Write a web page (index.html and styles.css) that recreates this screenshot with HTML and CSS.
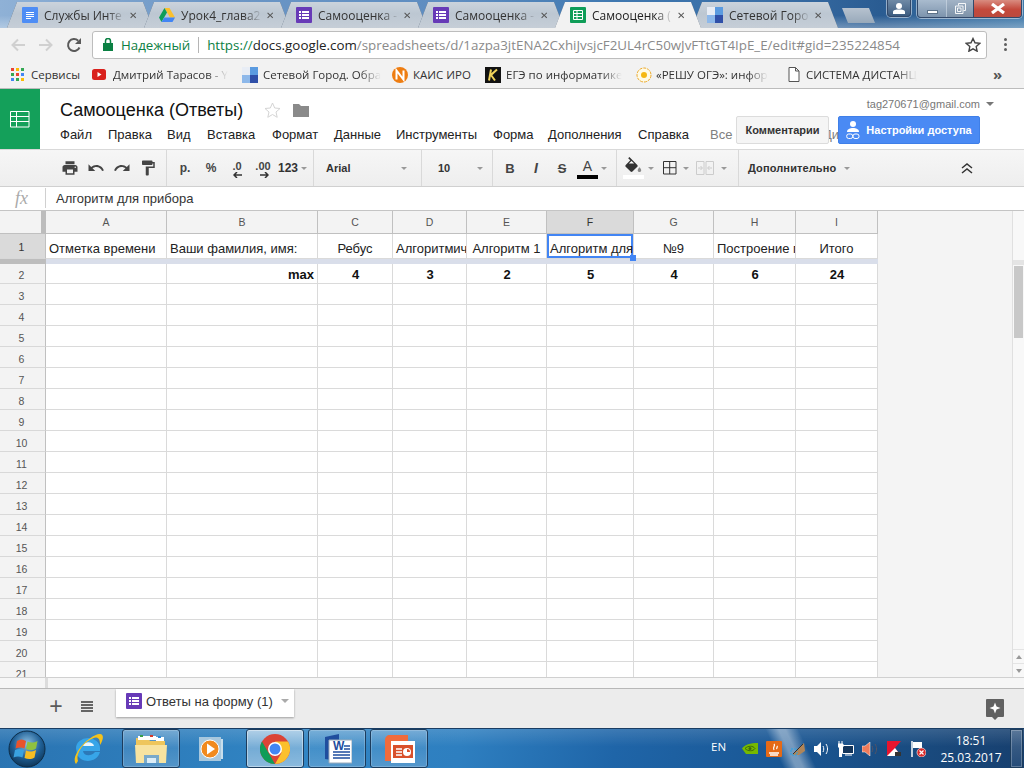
FILE: index.html
```html
<!DOCTYPE html>
<html lang="ru">
<head>
<meta charset="utf-8">
<title>Самооценка (Ответы)</title>
<link rel="stylesheet" href="styles.css">
</head>
<body>
<svg class="defs" width="0" height="0">
  <symbol id="i-forms" viewBox="0 0 16 16"><rect width="16" height="16" rx="1" fill="#673ab7"/><path d="M3 4h2v2H3zM6 4h7v2H6zM3 7h2v2H3zM6 7h7v2H6zM3 10h2v2H3zM6 10h7v2H6z" fill="#fff"/></symbol>
  <symbol id="i-sheets" viewBox="0 0 16 16"><rect width="16" height="16" rx="1" fill="#0f9d58"/><path d="M3.500 3.500h9v9h-9zM3.500 6.500h9M3.500 9.500h9M7 3.500v9" fill="none" stroke="#fff"/></symbol>
  <symbol id="i-sgo" viewBox="0 0 16 16"><rect width="16" height="16" fill="#e8edf5"/><rect x="8" width="8" height="8" fill="#5b9be0"/><rect y="8" width="8" height="8" fill="#8db8ea"/><rect x="8" y="8" width="8" height="8" fill="#2f4fa8"/></symbol>
</svg>

<header class="tabstrip">
  <div class="tab">
    <svg class="favicon" width="16" height="16" viewBox="0 0 16 16"><rect width="16" height="16" rx="1" fill="#4e8df5"/><path d="M4 5h8v1H4zM4 7h8v1H4zM4 9h8v1H4zM4 11h5v1H4z" fill="#fff"/></svg>
    <span class="tab-title">Службы Инте</span><span class="tab-x">✕</span>
  </div>
  <div class="tab">
    <svg class="favicon" width="16" height="16" viewBox="0 0 16 16"><path d="M5.500 1h5L16 10.500h-5z" fill="#fbc02d"/><path d="M5.500 1L0 10.500l2.500 4.500L8 5.500z" fill="#0f9d58"/><path d="M2.500 15h11l2.500-4.500H5.300z" fill="#4285f4"/></svg>
    <span class="tab-title">Урок4_глава2</span><span class="tab-x">✕</span>
  </div>
  <div class="tab">
    <svg class="favicon" width="16" height="16"><use href="#i-forms"/></svg>
    <span class="tab-title">Самооценка -</span><span class="tab-x">✕</span>
  </div>
  <div class="tab">
    <svg class="favicon" width="16" height="16"><use href="#i-forms"/></svg>
    <span class="tab-title">Самооценка -</span><span class="tab-x">✕</span>
  </div>
  <div class="tab tab-active">
    <svg class="favicon" width="16" height="16"><use href="#i-sheets"/></svg>
    <span class="tab-title">Самооценка (</span><span class="tab-x">✕</span>
  </div>
  <div class="tab">
    <svg class="favicon" width="16" height="16"><use href="#i-sgo"/></svg>
    <span class="tab-title">Сетевой Горо</span><span class="tab-x">✕</span>
  </div>
  <div class="newtab"></div>
  <div class="winctl">
    <div class="wbtn wbtn-user"><svg width="12" height="11" viewBox="0 0 12 11"><circle cx="6" cy="3" r="3" fill="#fff"/><path d="M0 11V9c0-2 3-2.500 6-2.500S12 7 12 9v2z" fill="#fff"/></svg></div>
    <div class="wgroup">
      <div class="wbtn wbtn-min"><i class="gl-min"></i></div>
      <div class="wbtn wbtn-max"><svg width="11" height="11" viewBox="0 0 11 11"><path d="M3.500 2.500v-2h7v7h-2M.5 3h7.500v7.500H.5zM2.500 5h3.500v3.500H2.500z" fill="none" stroke="#fff" stroke-opacity=".9"/></svg></div>
      <div class="wbtn wbtn-close"><svg width="16" height="11" viewBox="0 0 16 11"><path d="M2 1l12 9M14 1L2 10" stroke="#fff" stroke-width="3.200"/></svg></div>
    </div>
  </div>
</header>

<nav class="omnirow">
  <svg class="navic nav-back" width="16" height="16" viewBox="0 0 16 16"><path d="M15 8H3M8 2.500L2.500 8 8 13.500" fill="none" stroke="#d0d0d0" stroke-width="2"/></svg>
  <svg class="navic nav-fwd" width="16" height="16" viewBox="0 0 16 16"><path d="M1 8h12M8 2.500L13.500 8 8 13.500" fill="none" stroke="#d0d0d0" stroke-width="2"/></svg>
  <svg class="navic nav-reload" width="16" height="16" viewBox="0 0 16 16"><path d="M13.500 10.500A6 6 0 1 1 12.200 3.700" fill="none" stroke="#5a5a5a" stroke-width="2"/><path d="M15 1v6H9z" fill="#5a5a5a"/></svg>
  <div class="omnibox">
    <svg class="lock" width="10" height="13" viewBox="0 0 10 13"><path d="M0 5h10v8H0z" fill="#0b8043"/><path d="M2.500 5V3a2.500 2.500 0 0 1 5 0v2" fill="none" stroke="#0b8043" stroke-width="1.500"/></svg>
    <span class="secure">Надежный</span>
    <i class="omni-sep"></i>
    <span class="url"><span class="url-s">https://</span><span class="url-d">docs.google.com</span>/spreadsheets/d/1azpa3jtENA2CxhiJvsjcF2UL4rC50wJvFTtGT4IpE_E/edit#gid=235224854</span>
    <svg class="omni-star" width="16" height="15" viewBox="0 0 16 15"><path d="M8 1.500l2 4.300 4.700.6-3.500 3.200.9 4.600L8 11.900l-4.100 2.300.9-4.600L1.300 6.400 6 5.800z" fill="none" stroke="#444" stroke-width="1.400"/></svg>
  </div>
  <div class="kebab"><i></i><i></i><i></i></div>
</nav>

<nav class="bookmarks">
  <div class="bm bm-apps">
    <svg width="14" height="14" viewBox="0 0 14 14"><path d="M0 0h3v3H0z" fill="#ea4335"/><path d="M5 0h3v3H5z" fill="#fbbc05"/><path d="M10 0h3v3h-3z" fill="#34a853"/><path d="M0 5h3v3H0z" fill="#34a853"/><path d="M5 5h3v3H5z" fill="#ea4335"/><path d="M10 5h3v3h-3z" fill="#4285f4"/><path d="M0 10h3v3H0z" fill="#4285f4"/><path d="M5 10h3v3H5z" fill="#34a853"/><path d="M10 10h3v3h-3z" fill="#fbbc05"/></svg>
    <span>Сервисы</span>
  </div>
  <div class="bm bm-yt">
    <svg width="14" height="11" viewBox="0 0 14 11"><rect width="14" height="11" rx="2.500" fill="#d9201c"/><path d="M5.500 3l4 2.500-4 2.500z" fill="#fff"/></svg>
    <span class="bm-fade">Дмитрий Тарасов - Y</span>
  </div>
  <div class="bm bm-sgo">
    <svg width="16" height="16"><use href="#i-sgo"/></svg>
    <span class="bm-fade">Сетевой Город. Обра</span>
  </div>
  <div class="bm bm-kais">
    <svg width="16" height="16" viewBox="0 0 16 16"><circle cx="8" cy="8" r="8" fill="#ee7d11"/><path d="M4.500 12.500v-9l7 9v-9" fill="none" stroke="#fff" stroke-width="2"/></svg>
    <span>КАИС ИРО</span>
  </div>
  <div class="bm bm-ege">
    <svg width="16" height="16" viewBox="0 0 16 16"><rect width="16" height="16" fill="#111"/><path d="M6 2.500L4 13.500M12 2.500L6 8l4 5.500" fill="none" stroke="#f0d35a" stroke-width="2"/></svg>
    <span class="bm-fade">ЕГЭ по информатике</span>
  </div>
  <div class="bm bm-oge">
    <svg width="16" height="16" viewBox="0 0 16 16"><circle cx="8" cy="8" r="7" fill="#fffbe6" stroke="#eda92a" stroke-dasharray="3 1"/><circle cx="8" cy="8" r="3" fill="#f5b813"/></svg>
    <span class="bm-fade">«РЕШУ ОГЭ»: инфор</span>
  </div>
  <div class="bm bm-sys">
    <svg width="12" height="15" viewBox="0 0 12 15"><path d="M1 .5h6.500L11 4v10.500H1zM7.500.5V4H11" fill="#fff" stroke="#555"/></svg>
    <span class="bm-fade">СИСТЕМА ДИСТАНЦ</span>
  </div>
  <span class="bm-more">»</span>
</nav>

<section class="app-head">
  <div class="app-logo"><svg width="20" height="17" viewBox="0 0 20 17"><path d="M.5.500h18.500v15.500H.5zM.5 5.500h18.500M.5 10.500h18.500M6.500.500v15.500" fill="none" stroke="#fff"/></svg></div>
  <div class="app-main">
    <div class="doc-row">
      <span class="doc-title">Самооценка (Ответы)</span>
      <svg class="doc-star" width="17" height="16" viewBox="0 0 17 16"><path d="M8.500 1l2.200 5 5.300.5-4 3.500 1.200 5.300-4.700-2.800-4.700 2.800L5 10 1 6.500 6.300 6z" fill="none" stroke="#d4d4d4"/></svg>
      <svg class="doc-folder" width="16" height="13" viewBox="0 0 16 13"><path d="M0 0h6l2 2h8v11H0z" fill="#8a8a8a"/></svg>
    </div>
    <div class="menu">
      <span class="m m1">Файл</span><span class="m m2">Правка</span><span class="m m3">Вид</span><span class="m m4">Вставка</span><span class="m m5">Формат</span><span class="m m6">Данные</span><span class="m m7">Инструменты</span><span class="m m8">Форма</span><span class="m m9">Дополнения</span><span class="m m10">Справка</span><span class="saved">Все изменения на Диске</span>
    </div>
  </div>
  <div class="account">tag270671@gmail.com<i class="caret caret-acc"></i></div>
  <div class="head-btn btn-comments">Комментарии</div>
  <div class="head-btn btn-share">
    <svg width="14" height="19" viewBox="0 0 14 19"><circle cx="7" cy="3" r="3" fill="#fff"/><path d="M1 11c0-3 3-4 6-4s6 1 6 4z" fill="#fff"/><rect x=".7" y="13" width="6" height="4.500" rx="2" fill="none" stroke="#fff"/><rect x="7" y="13" width="6" height="4.500" rx="2" fill="none" stroke="#fff"/></svg>
    <span>Настройки доступа</span>
  </div>
</section>

<section class="toolbar">
  <div class="tg tg1">
    <div class="tb"><svg width="18" height="18" viewBox="0 0 24 24"><path fill="#444" d="M19 8H5c-1.660 0-3 1.340-3 3v6h4v4h12v-4h4v-6c0-1.660-1.340-3-3-3zm-3 11H8v-5h8v5zm3-7c-.55 0-1-.45-1-1s.45-1 1-1 1 .45 1 1-.45 1-1 1zm-1-9H6v4h12V3z"/></svg></div>
    <div class="tb"><svg width="18" height="18" viewBox="0 0 24 24"><path fill="#444" d="M12.500 8c-2.650 0-5.050.99-6.900 2.600L2 7v9h9l-3.620-3.620c1.390-1.160 3.160-1.880 5.120-1.880 3.540 0 6.550 2.310 7.600 5.500l2.370-.78C21.080 11.030 17.150 8 12.500 8z"/></svg></div>
    <div class="tb"><svg width="18" height="18" viewBox="0 0 24 24"><path fill="#444" d="M18.400 10.600C16.550 8.990 14.150 8 11.500 8c-4.650 0-8.580 3.030-9.960 7.220L3.900 16c1.050-3.190 4.050-5.500 7.600-5.500 1.950 0 3.730.72 5.120 1.880L13 16h9V7l-3.600 3.600z"/></svg></div>
    <div class="tb"><svg width="18" height="18" viewBox="0 0 24 24"><path fill="#444" d="M18 4V3c0-.55-.45-1-1-1H5c-.55 0-1 .45-1 1v4c0 .55.45 1 1 1h12c.55 0 1-.45 1-1V6h1v4H9v11c0 .55.45 1 1 1h2c.55 0 1-.45 1-1v-9h8V4h-3z"/></svg></div>
  </div>
  <div class="tg tg2">
    <div class="tb tb-t">р.</div>
    <div class="tb tb-t">%</div>
    <div class="tb tb-dec"><span>.0</span><svg width="9" height="6" viewBox="0 0 9 6"><path d="M9 3H2M4 0L1 3l3 3" fill="none" stroke="#333" stroke-width="1.500"/></svg></div>
    <div class="tb tb-dec"><span>.00</span><svg class="dec-r" width="9" height="6" viewBox="0 0 9 6"><path d="M0 3h7M5 0l3 3-3 3" fill="none" stroke="#333" stroke-width="1.500"/></svg></div>
    <div class="tb-123">123<i class="caret caret-tb"></i></div>
  </div>
  <div class="tg tg3"><span class="tb-sel">Arial</span><i class="caret caret-tb"></i></div>
  <div class="tg tg4"><span class="tb-sel">10</span><i class="caret caret-tb"></i></div>
  <div class="tg tg5">
    <div class="tb tb-b">B</div>
    <div class="tb tb-i">I</div>
    <div class="tb tb-s">S</div>
    <div class="tb tb-a">A<i class="a-bar"></i></div>
    <i class="caret caret-tb caret-a"></i>
  </div>
  <div class="tg tg6">
    <div class="tb tb-fill"><svg width="17" height="15" viewBox="3 0 18.500 17"><path fill="#333" d="M16.560 8.940L7.620 0 6.210 1.410l2.380 2.380-5.150 5.150c-.59.59-.59 1.540 0 2.120l5.500 5.500c.29.29.68.44 1.060.44s.77-.15 1.060-.44l5.500-5.500c.59-.58.59-1.530 0-2.120z"/><path fill="#fff" d="M7 7.500l3-3 3 3z"/><path fill="#8a8a8a" d="M19 11.500s-2 2.170-2 3.500c0 1.100.9 2 2 2s2-.9 2-2c0-1.330-2-3.500-2-3.500z"/></svg><i class="fill-bar"></i></div>
    <i class="caret caret-tb caret-fill"></i>
    <div class="tb tb-nar"><svg width="14" height="14" viewBox="0 0 14 14"><path d="M.5.500h12.500v12.500H.5zM.5 6.700h12.500M6.700.500v12.500" fill="none" stroke="#333"/></svg></div>
    <i class="caret caret-tb caret-bord"></i>
    <div class="tb tb-nar"><svg width="18" height="14" viewBox="0 0 18 14"><path d="M.5.500h7.500v13H.5zM10 .5h7.500v13H10zM2 7h4M16 7h-4M4.500 5l2 2-2 2M13.500 5l-2 2 2 2" fill="none" stroke="#ccc"/></svg></div>
    <i class="caret caret-tb caret-merge"></i>
  </div>
  <div class="tg tg7">
    <span class="tb-more">Дополнительно</span><i class="caret caret-tb"></i>
    <svg class="collapse" width="12" height="11" viewBox="0 0 12 11"><path d="M1 5l5-4 5 4M1 10l5-4 5 4" fill="none" stroke="#333" stroke-width="1.500"/></svg>
  </div>
</section>

<section class="fbar">
  <span class="fx">fx</span>
  <span class="fval">Алгоритм для прибора</span>
</section>

<main class="sheet">
  <div class="grid">
    <div class="corner"></div>
    <div class="ch">A</div><div class="ch">B</div><div class="ch">C</div><div class="ch">D</div><div class="ch">E</div><div class="ch ch-sel">F</div><div class="ch">G</div><div class="ch">H</div><div class="ch">I</div>

    <div class="rh rh-sel">1</div>
    <div class="c c-b">Отметка времени</div>
    <div class="c c-b">Ваши фамилия, имя:</div>
    <div class="c c-b c-m">Ребус</div>
    <div class="c c-b">Алгоритмич</div>
    <div class="c c-b c-m">Алгоритм 1</div>
    <div class="c c-b c-active">Алгоритм для<i class="handle"></i></div>
    <div class="c c-b c-m">№9</div>
    <div class="c c-b">Построение г</div>
    <div class="c c-b c-m">Итого</div>

    <div class="frz-h"></div><div class="frz"></div>

    <div class="rh">2</div>
    <div class="c"></div>
    <div class="c c-r c-bold">max</div>
    <div class="c c-m c-bold">4</div>
    <div class="c c-m c-bold">3</div>
    <div class="c c-m c-bold">2</div>
    <div class="c c-m c-bold">5</div>
    <div class="c c-m c-bold">4</div>
    <div class="c c-m c-bold">6</div>
    <div class="c c-m c-bold">24</div>

    <div class="rh">3</div><div class="c"></div><div class="c"></div><div class="c"></div><div class="c"></div><div class="c"></div><div class="c"></div><div class="c"></div><div class="c"></div><div class="c"></div>
    <div class="rh">4</div><div class="c"></div><div class="c"></div><div class="c"></div><div class="c"></div><div class="c"></div><div class="c"></div><div class="c"></div><div class="c"></div><div class="c"></div>
    <div class="rh">5</div><div class="c"></div><div class="c"></div><div class="c"></div><div class="c"></div><div class="c"></div><div class="c"></div><div class="c"></div><div class="c"></div><div class="c"></div>
    <div class="rh">6</div><div class="c"></div><div class="c"></div><div class="c"></div><div class="c"></div><div class="c"></div><div class="c"></div><div class="c"></div><div class="c"></div><div class="c"></div>
    <div class="rh">7</div><div class="c"></div><div class="c"></div><div class="c"></div><div class="c"></div><div class="c"></div><div class="c"></div><div class="c"></div><div class="c"></div><div class="c"></div>
    <div class="rh">8</div><div class="c"></div><div class="c"></div><div class="c"></div><div class="c"></div><div class="c"></div><div class="c"></div><div class="c"></div><div class="c"></div><div class="c"></div>
    <div class="rh">9</div><div class="c"></div><div class="c"></div><div class="c"></div><div class="c"></div><div class="c"></div><div class="c"></div><div class="c"></div><div class="c"></div><div class="c"></div>
    <div class="rh">10</div><div class="c"></div><div class="c"></div><div class="c"></div><div class="c"></div><div class="c"></div><div class="c"></div><div class="c"></div><div class="c"></div><div class="c"></div>
    <div class="rh">11</div><div class="c"></div><div class="c"></div><div class="c"></div><div class="c"></div><div class="c"></div><div class="c"></div><div class="c"></div><div class="c"></div><div class="c"></div>
    <div class="rh">12</div><div class="c"></div><div class="c"></div><div class="c"></div><div class="c"></div><div class="c"></div><div class="c"></div><div class="c"></div><div class="c"></div><div class="c"></div>
    <div class="rh">13</div><div class="c"></div><div class="c"></div><div class="c"></div><div class="c"></div><div class="c"></div><div class="c"></div><div class="c"></div><div class="c"></div><div class="c"></div>
    <div class="rh">14</div><div class="c"></div><div class="c"></div><div class="c"></div><div class="c"></div><div class="c"></div><div class="c"></div><div class="c"></div><div class="c"></div><div class="c"></div>
    <div class="rh">15</div><div class="c"></div><div class="c"></div><div class="c"></div><div class="c"></div><div class="c"></div><div class="c"></div><div class="c"></div><div class="c"></div><div class="c"></div>
    <div class="rh">16</div><div class="c"></div><div class="c"></div><div class="c"></div><div class="c"></div><div class="c"></div><div class="c"></div><div class="c"></div><div class="c"></div><div class="c"></div>
    <div class="rh">17</div><div class="c"></div><div class="c"></div><div class="c"></div><div class="c"></div><div class="c"></div><div class="c"></div><div class="c"></div><div class="c"></div><div class="c"></div>
    <div class="rh">18</div><div class="c"></div><div class="c"></div><div class="c"></div><div class="c"></div><div class="c"></div><div class="c"></div><div class="c"></div><div class="c"></div><div class="c"></div>
    <div class="rh">19</div><div class="c"></div><div class="c"></div><div class="c"></div><div class="c"></div><div class="c"></div><div class="c"></div><div class="c"></div><div class="c"></div><div class="c"></div>
    <div class="rh">20</div><div class="c"></div><div class="c"></div><div class="c"></div><div class="c"></div><div class="c"></div><div class="c"></div><div class="c"></div><div class="c"></div><div class="c"></div>
    <div class="rh">21</div><div class="c"></div><div class="c"></div><div class="c"></div><div class="c"></div><div class="c"></div><div class="c"></div><div class="c"></div><div class="c"></div><div class="c"></div>
  </div>
  <div class="gutter"></div>
  <div class="vscroll">
    <div class="vs-top"></div>
    <div class="vs-track"><div class="vs-thumb"></div></div>
    <div class="vs-btn"><i class="tri-up"></i></div>
    <div class="vs-btn"><i class="tri-down"></i></div>
  </div>
</main>

<div class="hscroll"><div class="hs-left"></div><div class="hs-grip"></div></div>

<section class="sheetbar">
  <span class="sb-plus">+</span>
  <div class="sb-list"><i></i><i></i><i></i><i></i></div>
  <div class="sb-tab">
    <svg width="16" height="16"><use href="#i-forms"/></svg>
    <span>Ответы на форму (1)</span>
    <i class="caret caret-sb"></i>
  </div>
  <svg class="explore" width="18" height="21" viewBox="0 0 18 21"><path d="M1 0h16a1 1 0 0 1 1 1v16a1 1 0 0 1-1 1h-5l-3 3-3-3H1a1 1 0 0 1-1-1V1a1 1 0 0 1 1-1z" fill="#616161"/><path d="M9 3.500l1.500 4 4 1.500-4 1.500-1.500 4-1.500-4-4-1.500 4-1.500z" fill="#fff"/></svg>
</section>

<footer class="taskbar">
  <svg class="orb" width="38" height="38" viewBox="0 0 38 38">
    <defs>
      <radialGradient id="orbg" cx=".5" cy=".35" r=".7"><stop offset="0" stop-color="#8cc0e4"/><stop offset=".55" stop-color="#1f5f95"/><stop offset="1" stop-color="#0b2f4e"/></radialGradient>
    </defs>
    <circle cx="19" cy="19" r="18" fill="url(#orbg)" stroke="#0d2c46"/>
    <path d="M9 11c3-2 6-2 9 0l-1.500 7.500c-3-1.500-6-1.500-9 0z" fill="#e8532b"/>
    <path d="M19.500 11.500c3 1.500 6 1.500 10-.5l-1.500 7.500c-3 2-6.500 2-10 .5z" fill="#8fc240"/>
    <path d="M7 20c3-1.500 6-1.500 9 0l-1.500 7.500c-3-1.500-6-1.500-9 0z" fill="#3aa2e0"/>
    <path d="M18 20.500c3 1.500 6 1.500 10-.5l-1.500 7.500c-3 2-6.500 2-10 .5z" fill="#f6bd22"/>
  </svg>
  <svg class="ti ti-ie" width="32" height="32" viewBox="0 0 32 32">
    <path d="M4 15a12 10 0 0 1 24 0v3H11c.5 5 8 6 12 1h5C25 30 9 31 5 21" fill="#37a5e8"/>
    <path d="M11 13h11c-1-5-10-5-11 0z" fill="#e8f6ff"/>
    <path d="M4 31C-2 24 14 4 27 1c5-1 5 5 1 11 0-3 0-7-4-7.500C14 6 3 20 6 28z" fill="#f4c21c"/>
  </svg>
  <div class="tbtn tbtn-ex">
    <svg width="32" height="30" viewBox="0 0 32 30"><path d="M1 4h12l2 3h15v21H1z" fill="#eec65c"/><path d="M3 2h10v4H3z" fill="#fff"/><path d="M5 1h3v2H5z" fill="#3aa04a"/><path d="M13 2h8v4h-8z" fill="#fff"/><path d="M15 1h3v2h-3z" fill="#d83a2a"/><path d="M21 3h8v4h-8z" fill="#fff"/><path d="M23 2h3v2h-3z" fill="#2a8ad8"/><path d="M0 11h32l-1 18H1z" fill="#f7e3a0"/><path d="M9 21h15v8H9z" fill="#79aacb"/><path d="M12 24h9v5h-9z" fill="#dcedf7"/></svg>
  </div>
  <div class="tslot">
    <svg width="26" height="26" viewBox="0 0 26 26"><rect x="0" y="1" width="22" height="24" fill="#a8c8de"/><rect x="22" y="3" width="2" height="20" fill="#c8deec"/><circle cx="11" cy="13" r="9" fill="#f18a1e" stroke="#fff"/><path d="M8 7.500l8 5.500-8 5.500z" fill="#fff"/></svg>
  </div>
  <div class="tbtn tbtn-on">
    <svg width="30" height="30" viewBox="0 0 30 30"><circle cx="15" cy="15" r="15" fill="#db4437"/><path d="M15 7.500h13A15 15 0 0 1 15 30l6.500-11.300z" fill="#fbc02d"/><path d="M2 7.500L8.500 18.700 15 30A15 15 0 0 1 2 7.500z" fill="#0f9d58"/><circle cx="15" cy="15" r="7" fill="#fff"/><circle cx="15" cy="15" r="5.500" fill="#4285f4"/></svg>
  </div>
  <div class="tbtn">
    <svg width="30" height="30" viewBox="0 0 30 30"><path d="M3 3l14-3v27L3 25z" fill="#1f4e9e"/><path d="M7 6h23v23H7z" fill="#fff" stroke="#9ab"/><text x="11" y="16" class="app-w">W</text><path d="M22 12h6M22 15h6M11 18h17M11 21h17M11 24h17" stroke="#1f4e9e" stroke-width="1.500"/></svg>
  </div>
  <div class="tbtn">
    <svg width="32" height="30" viewBox="0 0 32 30"><path d="M2 6c0-3 2-5 5-5h18v26H2z" fill="#f06b3c"/><path d="M8 7h24v22H8z" fill="#fff"/><path d="M10 11h20v13H10z" fill="#d9502b"/><path d="M13 15h6M13 18h6M13 21h6" stroke="#fff" stroke-width="1.500"/><circle cx="24" cy="18" r="4" fill="#fff"/><path d="M24 18V15a3 3 0 0 1 3 3z" fill="#d9502b"/></svg>
  </div>
  <div class="tray">
    <span class="lang">EN</span>
    <svg class="tr tr-nv" width="16" height="11" viewBox="0 0 16 11"><path d="M0 5.500C3 1.500 8 0 16 0v11H4z" fill="#76b900"/><path d="M3 5.500C6 2.500 11 2.500 13 5.500 11 8.500 6 8.500 3 5.500z" fill="none" stroke="#3e6a0a"/><circle cx="8" cy="5.500" r="1.500" fill="#3e6a0a"/></svg>
    <svg class="tr tr-java" width="16" height="16" viewBox="0 0 16 16"><rect width="16" height="16" rx="1" fill="#e56a17"/><path d="M3 12h10M4 14h8M8 3c2 2-2 3 0 6M11 5c1 1-1 2 0 3" fill="none" stroke="#fff" stroke-width="1.300"/></svg>
    <svg class="tr tr-pen" width="16" height="15" viewBox="0 0 16 15"><path d="M2 14L14 2l1 8-6 4z" fill="#b08558"/><path d="M1 8h6v6H1z" fill="none" stroke="#27a2e8" stroke-dasharray="2 1"/><path d="M3 13L13 3" stroke="#333"/></svg>
    <svg class="tr tr-vol" width="15" height="14" viewBox="0 0 15 14"><path d="M0 4h3l4-4v14l-4-4H0z" fill="#fff"/><path d="M9 4c1 2 1 4 0 6M12 2c2 3 2 7 0 10" fill="none" stroke="#fff"/></svg>
    <svg class="tr tr-net" width="16" height="16" viewBox="0 0 16 16"><path d="M4.500 4.500h11v8h-11z" fill="#14365c" stroke="#fff"/><path d="M1 0v3M4 0v3M0 3h5v3H3.500v10h-2V6H0zM7 14h7" fill="#fff" stroke="#fff"/></svg>
    <svg class="tr tr-spk" width="15" height="14" viewBox="0 0 15 14"><path d="M0 4h3l5-4v14l-5-4H0z" fill="#ef7b5a" stroke="#fff" stroke-width=".5"/><path d="M10 4c1 2 1 4 0 6M13 2c2 3 2 7 0 10" fill="none" stroke="#556"/></svg>
    <svg class="tr tr-kav" width="14" height="15" viewBox="0 0 14 15"><path d="M0 0h14L8 7l6 8H0z" fill="#e8142e"/><path d="M0 15L8 7l6 8z" fill="#fff"/><path d="M8 11h6v4H8z" fill="#333"/></svg>
    <svg class="tr tr-flag" width="15" height="16" viewBox="0 0 15 16"><path d="M1 0v16" stroke="#fff" stroke-width="1.500"/><path d="M2 1h9v6H2z" fill="#fff"/><circle cx="10.500" cy="11.500" r="4.500" fill="#d92b2b" stroke="#fff" stroke-width=".6"/><path d="M8.500 9.500l4 4M12.500 9.500l-4 4" stroke="#fff" stroke-width="1.200"/></svg>
    <div class="clock"><span>18:51</span><span>25.03.2017</span></div>
    <div class="showdesk"></div>
  </div>
</footer>
</body>
</html>
```

FILE: styles.css
```css
* { box-sizing: border-box; }
html, body { margin: 0; padding: 0; }
body {
  width: 1024px;
  height: 768px;
  overflow: hidden;
  display: flex;
  flex-direction: column;
  background: #fff;
  font-family: "Liberation Sans", Arial, sans-serif;
  color: #222;
}
i { display: block; font-style: normal; }
.defs { position: absolute; }

/* ---------- tab strip ---------- */
.tabstrip {
  height: 28px;
  flex: none;
  display: flex;
  align-items: flex-end;
  padding-left: 7px;
  position: relative;
  background:
    linear-gradient(180deg, #ffffff00 55%, #ffffff50 100%),
    linear-gradient(90deg, #8fb1d6 0%, #6d97c6 20%, #5d8cc0 45%, #3f78b0 60%, #3a6ea6 75%, #2a5c92 86%, #3f79aa 100%);
}
.tab {
  position: relative;
  width: 146px;
  height: 26px;
  margin-right: -9px;
  flex: none;
  display: flex;
  align-items: center;
  padding-left: 15px;
  filter: drop-shadow(0 0 .6px #4a5a6c);
  font: 12px "Open Sans", "Noto Sans", sans-serif;
  color: #333;
}
.tab::before {
  content: "";
  position: absolute;
  inset: 0;
  clip-path: polygon(0 100%, 10px 0, 136px 0, 146px 100%);
  background: linear-gradient(180deg, #cbd3dc 0%, #bcc7d2 45%, #c6ced7 100%);
}
.tab > * { position: relative; }
.tab-active { z-index: 2; color: #222; }
.tab-active::before { background: #f2f2f2; }
.favicon { flex: none; }
.tab-title {
  width: 81px;
  margin-left: 6px;
  white-space: nowrap;
  overflow: hidden;
  -webkit-mask-image: linear-gradient(90deg, #000 78%, transparent);
  mask-image: linear-gradient(90deg, #000 78%, transparent);
}
.tab-x {
  margin-left: 4px;
  font-size: 10px;
  font-weight: 700;
  color: #555;
  font-family: "DejaVu Sans", sans-serif;
}
.newtab {
  width: 33px;
  height: 15px;
  margin: 0 0 5px 13px;
  flex: none;
  clip-path: polygon(0 0, 27px 0, 33px 100%, 6px 100%);
  background: linear-gradient(180deg, #b6c2cf, #98a9ba);
}
.winctl {
  position: absolute;
  top: 0;
  right: 2px;
  display: flex;
  gap: 6px;
}
.wgroup { display: flex; border: 1px solid #33496a; border-top: 0; border-radius: 0 0 4px 4px; box-shadow: 0 0 0 1px #c9d6e4aa; overflow: hidden; }
.wbtn { height: 17px; display: flex; align-items: center; justify-content: center; }
.wbtn-user {
  width: 24px;
  border: 1px solid #33496a;
  border-top: 0;
  border-radius: 0 0 4px 4px;
  box-shadow: 0 0 0 1px #c9d6e4aa;
  background: linear-gradient(180deg, #6f8aa6, #3d5c80);
}
.wbtn-min { width: 29px; background: linear-gradient(180deg, #a9bbce, #7d94ad); border-right: 1px solid #d8e1ea88; }
.wbtn-max { width: 27px; background: linear-gradient(180deg, #a2b3c6, #7d92a8); border-right: 1px solid #33496a; }
.wbtn-close { width: 47px; background: linear-gradient(180deg, #d98c80, #c4493c 55%, #bb4a3e); }
.gl-min { width: 11px; height: 4px; margin-top: 6px; background: #fff; border: 1px solid #5d7288; }

/* ---------- omnibox row ---------- */
.omnirow {
  height: 33px;
  flex: none;
  display: flex;
  align-items: center;
  background: #f2f2f2;
}
.navic { flex: none; }
.nav-back { margin-left: 10px; }
.nav-fwd { margin-left: 12px; }
.nav-reload { margin-left: 12px; }
.omnibox {
  width: 895px;
  height: 28px;
  margin-left: 10px;
  display: flex;
  align-items: center;
  background: #fff;
  border: 1px solid #bdbdbd;
  border-radius: 3px;
  font: 13.350px "Open Sans", "Noto Sans", sans-serif;
  white-space: nowrap;
}
.lock { margin-left: 10px; flex: none; }
.secure { margin-left: 8px; color: #0b8043; font-size: 13.300px; }
.omni-sep { width: 1px; height: 16px; margin: 0 8px; background: #b5b5b5; }
.url { color: #8a8a8a; flex: 1; overflow: hidden; }
.url-s { color: #0b8043; }
.url-d { color: #222; }
.omni-star { margin: 0 5px 0 4px; flex: none; }
.kebab { margin-left: 17px; display: flex; flex-direction: column; gap: 2px; }
.kebab i { width: 3px; height: 3px; background: #5f5f5f; border-radius: 50%; }

/* ---------- bookmarks ---------- */
.bookmarks {
  height: 28px;
  flex: none;
  display: flex;
  align-items: center;
  background: #f2f2f2;
  border-bottom: 1px solid #bcbcbc;
  font: 11.500px "Open Sans", "Noto Sans", sans-serif;
  color: #333;
  white-space: nowrap;
  position: relative;
}
.bm { display: flex; align-items: center; flex: none; overflow: hidden; }
.bm svg { flex: none; }
.bm-fade {
  overflow: hidden;
  -webkit-mask-image: linear-gradient(90deg, #000 82%, transparent);
  mask-image: linear-gradient(90deg, #000 82%, transparent);
}
.bm-apps { margin-left: 11px; width: 81px; gap: 6px; }
.bm-yt { width: 150px; gap: 7px; }
.bm-sgo { width: 150px; gap: 5px; }
.bm-kais { width: 93px; gap: 5px; }
.bm-ege { width: 151px; gap: 5px; }
.bm-oge { width: 152px; gap: 4px; }
.bm-sys { width: 134px; gap: 6px; }
.bm-more { margin-left: 71px; font-size: 15px; font-weight: 700; color: #555; line-height: 1; }

/* ---------- docs header ---------- */
.app-head {
  height: 61px;
  flex: none;
  display: flex;
  position: relative;
  background: #fff;
  border-bottom: 1px solid #d9d9d9;
}
.app-logo {
  width: 40px;
  flex: none;
  display: flex;
  align-items: center;
  justify-content: center;
  background: #14a05a;
}
.app-main { padding-left: 20px; flex: 1; min-width: 0; }
.doc-row { display: flex; align-items: center; height: 24px; margin-top: 9px; }
.doc-title { font-size: 18px; color: #111; }
.doc-star { margin-left: 21px; }
.doc-folder { margin-left: 12px; }
.menu { display: flex; height: 20px; margin-top: 2px; font-size: 13px; align-items: center; white-space: nowrap; overflow: hidden; color: #222; }
.m { flex: none; }
.m1 { width: 48px; }
.m2 { width: 59px; }
.m3 { width: 40px; }
.m4 { width: 65px; }
.m5 { width: 62px; }
.m6 { width: 62px; }
.m7 { width: 97px; }
.m8 { width: 55px; }
.m9 { width: 90px; }
.m10 { width: 72px; }
.saved { color: #808080; flex: none; }
.account {
  position: absolute;
  top: 9px;
  right: 30px;
  display: flex;
  align-items: center;
  gap: 6px;
  font-size: 11px;
  color: #777;
}
.head-btn {
  position: absolute;
  top: 27px;
  height: 28px;
  display: flex;
  align-items: center;
  justify-content: center;
  font-size: 11px;
  font-weight: 700;
  border-radius: 2px;
}
.btn-comments { left: 736px; width: 93px; background: #f5f5f5; border: 1px solid #dcdcdc; color: #333; }
.btn-share { left: 838px; width: 142px; background: #4a8af4; border: 1px solid #3f7fe8; color: #fff; gap: 6px; }

.caret { width: 0; height: 0; flex: none; border-style: solid; border-color: #888 transparent transparent; }
.caret-acc { border-width: 4px 4.500px 0; border-top-color: #777; }
.caret-tb { border-width: 3px 3px 0; border-top-color: #999; }
.caret-sb { border-width: 4px 4.500px 0; border-top-color: #aaa; margin-left: 4px; }

/* ---------- toolbar ---------- */
.toolbar {
  height: 37px;
  flex: none;
  display: flex;
  background: linear-gradient(180deg, #f6f6f6, #eeeeee);
  border-bottom: 1px solid #d0d0d0;
  color: #333;
  font-size: 11px;
  font-weight: 700;
}
.tg { display: flex; align-items: center; flex: none; border-right: 1px solid #d9d9d9; }
.tg1 { width: 167px; padding-left: 57px; }
.tg2 { width: 147px; padding-left: 5px; }
.tg3 { width: 108px; padding: 0 14px 0 12px; justify-content: space-between; }
.tg4 { width: 71px; padding: 0 9px 0 16px; justify-content: space-between; }
.tg5 { width: 124px; padding-left: 4px; }
.tg6 { width: 122px; padding-left: 4px; }
.tg7 { flex: 1; padding-left: 9px; border-right: 0; }
.tb { width: 26px; height: 26px; flex: none; display: flex; align-items: center; justify-content: center; position: relative; color: #444; }
.tb-t { font-size: 12px; }
.tb-dec { font-size: 11px; }
.tb-dec span { margin-top: -4px; }
.tb-dec svg { position: absolute; left: 9px; bottom: 3px; }
.tb-dec .dec-r { left: 10px; }
.tb-123 { margin-left: 2px; display: flex; align-items: center; gap: 3px; font-size: 12px; }
.tb-sel { font-size: 11px; }
.tb-b { font-size: 13px; font-weight: 700; }
.tb-i { font-size: 14px; font-style: italic; font-weight: 700; }
.tb-s { font-size: 13px; font-weight: 700; text-decoration: line-through; }
.tb-a { font-size: 14px; font-weight: 400; padding-bottom: 5px; width: 25px; }
.a-bar { position: absolute; left: 2px; bottom: 2px; width: 21px; height: 4px; background: #000; }
.caret-a { margin-left: 1px; }
.tb-fill { padding-bottom: 7px; width: 24px; }
.fill-bar { position: absolute; left: 2px; bottom: 2px; width: 21px; height: 4px; background: #fff; }
.tb-nar { width: 24px; margin-left: 4px; }
.caret-fill { margin-left: 3px; }
.caret-bord { margin-left: 1px; }
.caret-merge { margin-left: 4px; }
.tb-more { margin-right: 8px; letter-spacing: .12px; }
.collapse { margin-left: 111px; }

/* ---------- formula bar ---------- */
.fbar {
  height: 23px;
  flex: none;
  display: flex;
  align-items: center;
  padding-bottom: 1px;
  background: #fff;
  font-size: 13px;
  color: #333;
}
.fx {
  width: 46px;
  height: 20px;
  flex: none;
  padding-right: 2px;
  text-align: center;
  font: italic 18px/20px "Liberation Serif", serif;
  color: #aaa;
  border-right: 1px solid #d0d0d0;
}
.fval { margin-left: 10px; }

/* ---------- sheet ---------- */
.sheet {
  height: 467px;
  flex: none;
  display: flex;
  overflow: hidden;
  background: #f4f4f4;
  border-top: 1px solid #c4c4c4;
}
.grid {
  width: 878px;
  flex: none;
  display: grid;
  grid-template-columns: 46px 121px 151px 75px 74px 80px 87px 80px 82px 82px;
  grid-template-rows: 23px 25px 5px 20px repeat(19, 21px);
  font-size: 13px;
  color: #222;
  background: #fff;
  border-right: 1px solid #c8c8c8;
}
.corner { background: #f3f3f3; border-right: 5px solid #bcbcbc; border-bottom: 1px solid #c0c0c0; }
.ch {
  display: flex;
  align-items: center;
  justify-content: center;
  background: #f3f3f3;
  border-right: 1px solid #c0c0c0;
  border-bottom: 1px solid #c0c0c0;
  font-size: 10.500px;
  color: #555;
}
.ch-sel { background: #dadada; color: #333; }
.rh {
  display: flex;
  align-items: center;
  justify-content: center;
  padding: 3px 2px 0 0;
  background: #f3f3f3;
  border-right: 1px solid #c0c0c0;
  border-bottom: 1px solid #d8d8d8;
  font-size: 10.500px;
  color: #555;
}
.rh-sel { background: #dadada; color: #333; padding-top: 1px; }
.c {
  position: relative;
  min-width: 0;
  padding: 0 3px;
  white-space: nowrap;
  overflow: hidden;
  border-right: 1px solid #dadada;
  border-bottom: 1px solid #dadada;
  line-height: 20px;
}
.c-b { padding-top: 5px; }
.c-m { text-align: center; }
.c-r { text-align: right; }
.c-bold { padding-top: 1px; font-weight: 700; color: #111; }
.c-m.c-bold { padding-left: 3px; padding-right: 2px; }
.c-active { overflow: visible; box-shadow: inset 0 0 0 2px #4285f4; z-index: 1; }
.handle { position: absolute; right: -3px; bottom: -3px; width: 6px; height: 6px; background: #4285f4; }
.frz-h { background: #bdbdbd; }
.frz { grid-column: 2 / -1; background: #d9deea; }
.gutter { flex: 1; }
.vscroll { width: 12px; flex: none; display: flex; flex-direction: column; background: #f8f8f8; border-left: 1px solid #e0e0e0; }
.vs-top { height: 49px; flex: none; border-bottom: 5px solid #e4e4e4; box-sizing: content-box; }
.vs-track { flex: 1; padding: 0 1px; }
.vs-thumb { height: 72px; margin-top: 1px; background: #c8c8c8; }
.vs-btn { height: 14px; flex: none; display: flex; align-items: center; justify-content: center; border-top: 1px solid #e4e4e4; }
.tri-up { border: 3px solid transparent; border-top: 0; border-bottom: 4px solid #999; }
.tri-down { border: 3px solid transparent; border-bottom: 0; border-top: 4px solid #999; }

.hscroll {
  height: 12px;
  flex: none;
  display: flex;
  background: #f6f6f6;
  border-top: 1px solid #d0d0d0;
  border-bottom: 1px solid #b8b8b8;
}
.hs-left { width: 45px; }
.hs-grip { width: 3px; background: #dcdcdc; }

/* ---------- sheet bar ---------- */
.sheetbar {
  height: 39px;
  flex: none;
  position: relative;
  display: flex;
  align-items: flex-start;
  background: #ececec;
}
.sb-plus { width: 14px; margin: 7px 0 0 49px; font-size: 23px; line-height: 20px; color: #5a5a5a; text-align: center; }
.sb-list { margin: 12px 0 0 18px; display: flex; flex-direction: column; gap: 1px; }
.sb-list i { width: 12px; height: 2px; background: #666; }
.sb-tab {
  width: 178px;
  height: 28px;
  margin-left: 23px;
  padding: 0 0 4px 10px;
  display: flex;
  align-items: center;
  gap: 4px;
  background: #fff;
  box-shadow: 0 1px 2px #00000055;
  font-size: 13px;
  color: #333;
  white-space: nowrap;
}
.sb-tab svg { flex: none; }
.explore { position: absolute; left: 986px; top: 10px; }

/* ---------- taskbar ---------- */
.taskbar {
  height: 40px;
  flex: none;
  display: flex;
  align-items: center;
  position: relative;
  border-top: 1px solid #1a3d63;
  background:
    linear-gradient(65deg, #fff0 710px, #ffffff66 722px, #ffffff66 728px, #fff0 740px),
    linear-gradient(180deg, #ffffff22, #ffffff00 45%),
    linear-gradient(100deg, #2a74b2 0%, #3185c4 30%, #2e7fc0 45%, #1f65a8 60%, #1a5896 75%, #194a7e 90%, #173f6e 100%);
  color: #fff;
}
.orb { margin-left: 8px; flex: none; }
.ti-ie { margin-left: 26px; flex: none; }
.tbtn {
  width: 58px;
  height: 39px;
  margin-right: 4px;
  flex: none;
  display: flex;
  align-items: center;
  justify-content: center;
  border: 1px solid #1c3c5d;
  border-radius: 3px;
  background: linear-gradient(180deg, #ffffff40, #ffffff18 50%, #ffffff2e);
  box-shadow: inset 0 0 0 1px #ffffff30;
}
.tbtn-ex { margin-left: 18px; }
.tslot { width: 62px; height: 39px; flex: none; display: flex; align-items: center; padding-left: 15px; }
.tbtn-on { background: linear-gradient(180deg, #ffffff90, #ffffff55 50%, #ffffff70); box-shadow: inset 0 0 0 1px #ffffff66; }
.app-w { font: 700 12px "Liberation Sans", sans-serif; fill: #1f4e9e; }
.tray { flex: 1; height: 100%; display: flex; align-items: center; min-width: 0; }
.lang { width: 14px; margin: -5px 0 0 279px; font: 11.500px "Open Sans", "Noto Sans", sans-serif; white-space: nowrap; }
.tr { flex: none; }
.tr-nv { margin-left: 17px; }
.tr-java { margin-left: 8px; }
.tr-pen { margin-left: 8px; }
.tr-vol { margin-left: 8px; }
.tr-net { margin-left: 9px; }
.tr-spk { margin-left: 8px; }
.tr-kav { margin-left: 10px; }
.tr-flag { margin-left: 10px; }
.clock {
  width: 68px;
  margin-left: 11px;
  display: flex;
  flex-direction: column;
  align-items: center;
  gap: 2px;
  font: 12px/15px "Open Sans", "Noto Sans", sans-serif;
}
.showdesk {
  width: 13px;
  height: 100%;
  margin-left: 5px;
  background: linear-gradient(180deg, #ffffff30, #ffffff10);
  border: 1px solid #1c3c5d;
  box-shadow: inset 0 0 0 1px #ffffff40;
}
```
